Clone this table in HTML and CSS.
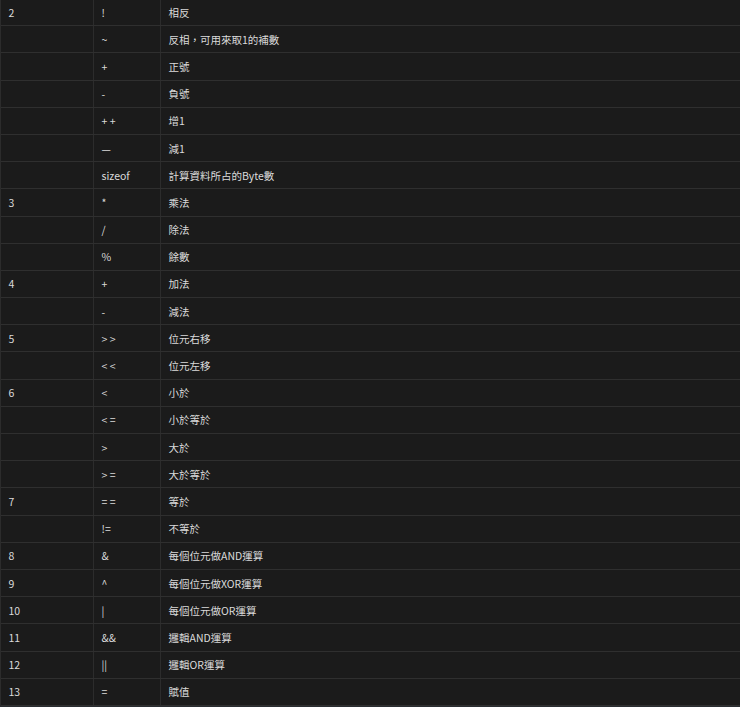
FILE: index.html
```html
<!DOCTYPE html>
<html lang="zh-Hant">
<head>
<meta charset="utf-8">
<title>運算子優先順序</title>
<link rel="stylesheet" href="styles.css">
</head>
<body>
<div class="table" role="table">
  <div class="row"><div class="cell">2</div><div class="cell">!</div><div class="cell">相反</div></div>
  <div class="row"><div class="cell"></div><div class="cell">~</div><div class="cell">反相，可用來取1的補數</div></div>
  <div class="row"><div class="cell"></div><div class="cell">+</div><div class="cell">正號</div></div>
  <div class="row"><div class="cell"></div><div class="cell">-</div><div class="cell">負號</div></div>
  <div class="row"><div class="cell"></div><div class="cell">+ +</div><div class="cell">增1</div></div>
  <div class="row"><div class="cell"></div><div class="cell">—</div><div class="cell">減1</div></div>
  <div class="row"><div class="cell"></div><div class="cell">sizeof</div><div class="cell">計算資料所占的Byte數</div></div>
  <div class="row"><div class="cell">3</div><div class="cell">*</div><div class="cell">乘法</div></div>
  <div class="row"><div class="cell"></div><div class="cell">/</div><div class="cell">除法</div></div>
  <div class="row"><div class="cell"></div><div class="cell">%</div><div class="cell">餘數</div></div>
  <div class="row"><div class="cell">4</div><div class="cell">+</div><div class="cell">加法</div></div>
  <div class="row"><div class="cell"></div><div class="cell">-</div><div class="cell">減法</div></div>
  <div class="row"><div class="cell">5</div><div class="cell">&gt; &gt;</div><div class="cell">位元右移</div></div>
  <div class="row"><div class="cell"></div><div class="cell">&lt; &lt;</div><div class="cell">位元左移</div></div>
  <div class="row"><div class="cell">6</div><div class="cell">&lt;</div><div class="cell">小於</div></div>
  <div class="row"><div class="cell"></div><div class="cell">&lt; =</div><div class="cell">小於等於</div></div>
  <div class="row"><div class="cell"></div><div class="cell">&gt;</div><div class="cell">大於</div></div>
  <div class="row"><div class="cell"></div><div class="cell">&gt; =</div><div class="cell">大於等於</div></div>
  <div class="row"><div class="cell">7</div><div class="cell">= =</div><div class="cell">等於</div></div>
  <div class="row"><div class="cell"></div><div class="cell">!=</div><div class="cell">不等於</div></div>
  <div class="row"><div class="cell">8</div><div class="cell">&amp;</div><div class="cell">每個位元做AND運算</div></div>
  <div class="row"><div class="cell">9</div><div class="cell">^</div><div class="cell">每個位元做XOR運算</div></div>
  <div class="row"><div class="cell">10</div><div class="cell">|</div><div class="cell">每個位元做OR運算</div></div>
  <div class="row"><div class="cell">11</div><div class="cell">&amp;&amp;</div><div class="cell">邏輯AND運算</div></div>
  <div class="row"><div class="cell">12</div><div class="cell">||</div><div class="cell">邏輯OR運算</div></div>
  <div class="row"><div class="cell">13</div><div class="cell">=</div><div class="cell">賦值</div></div>
</div>
</body>
</html>
```
FILE: styles.css
```css
html, body {
  margin: 0;
  padding: 0;
  background: #2a2d31;
}
body {
  font-family: "Noto Sans CJK TC", "Noto Sans", sans-serif;
  font-size: 10.5px;
  color: #dadada;
  overflow: hidden;
}
.table {
  margin-top: -1px;
  background: #1b1b1b;
  border-left: 1px solid #2c2c2c;
}
.row {
  display: grid;
  grid-template-columns: 92px 67px 1fr;
  height: 27.2px;
  box-sizing: border-box;
  border-bottom: 1px solid #2f2f2f;
}
.cell {
  display: flex;
  align-items: center;
  padding-left: 7.5px;
  white-space: nowrap;
}
.cell + .cell {
  border-left: 1px solid #2c2c2c;
}
```
